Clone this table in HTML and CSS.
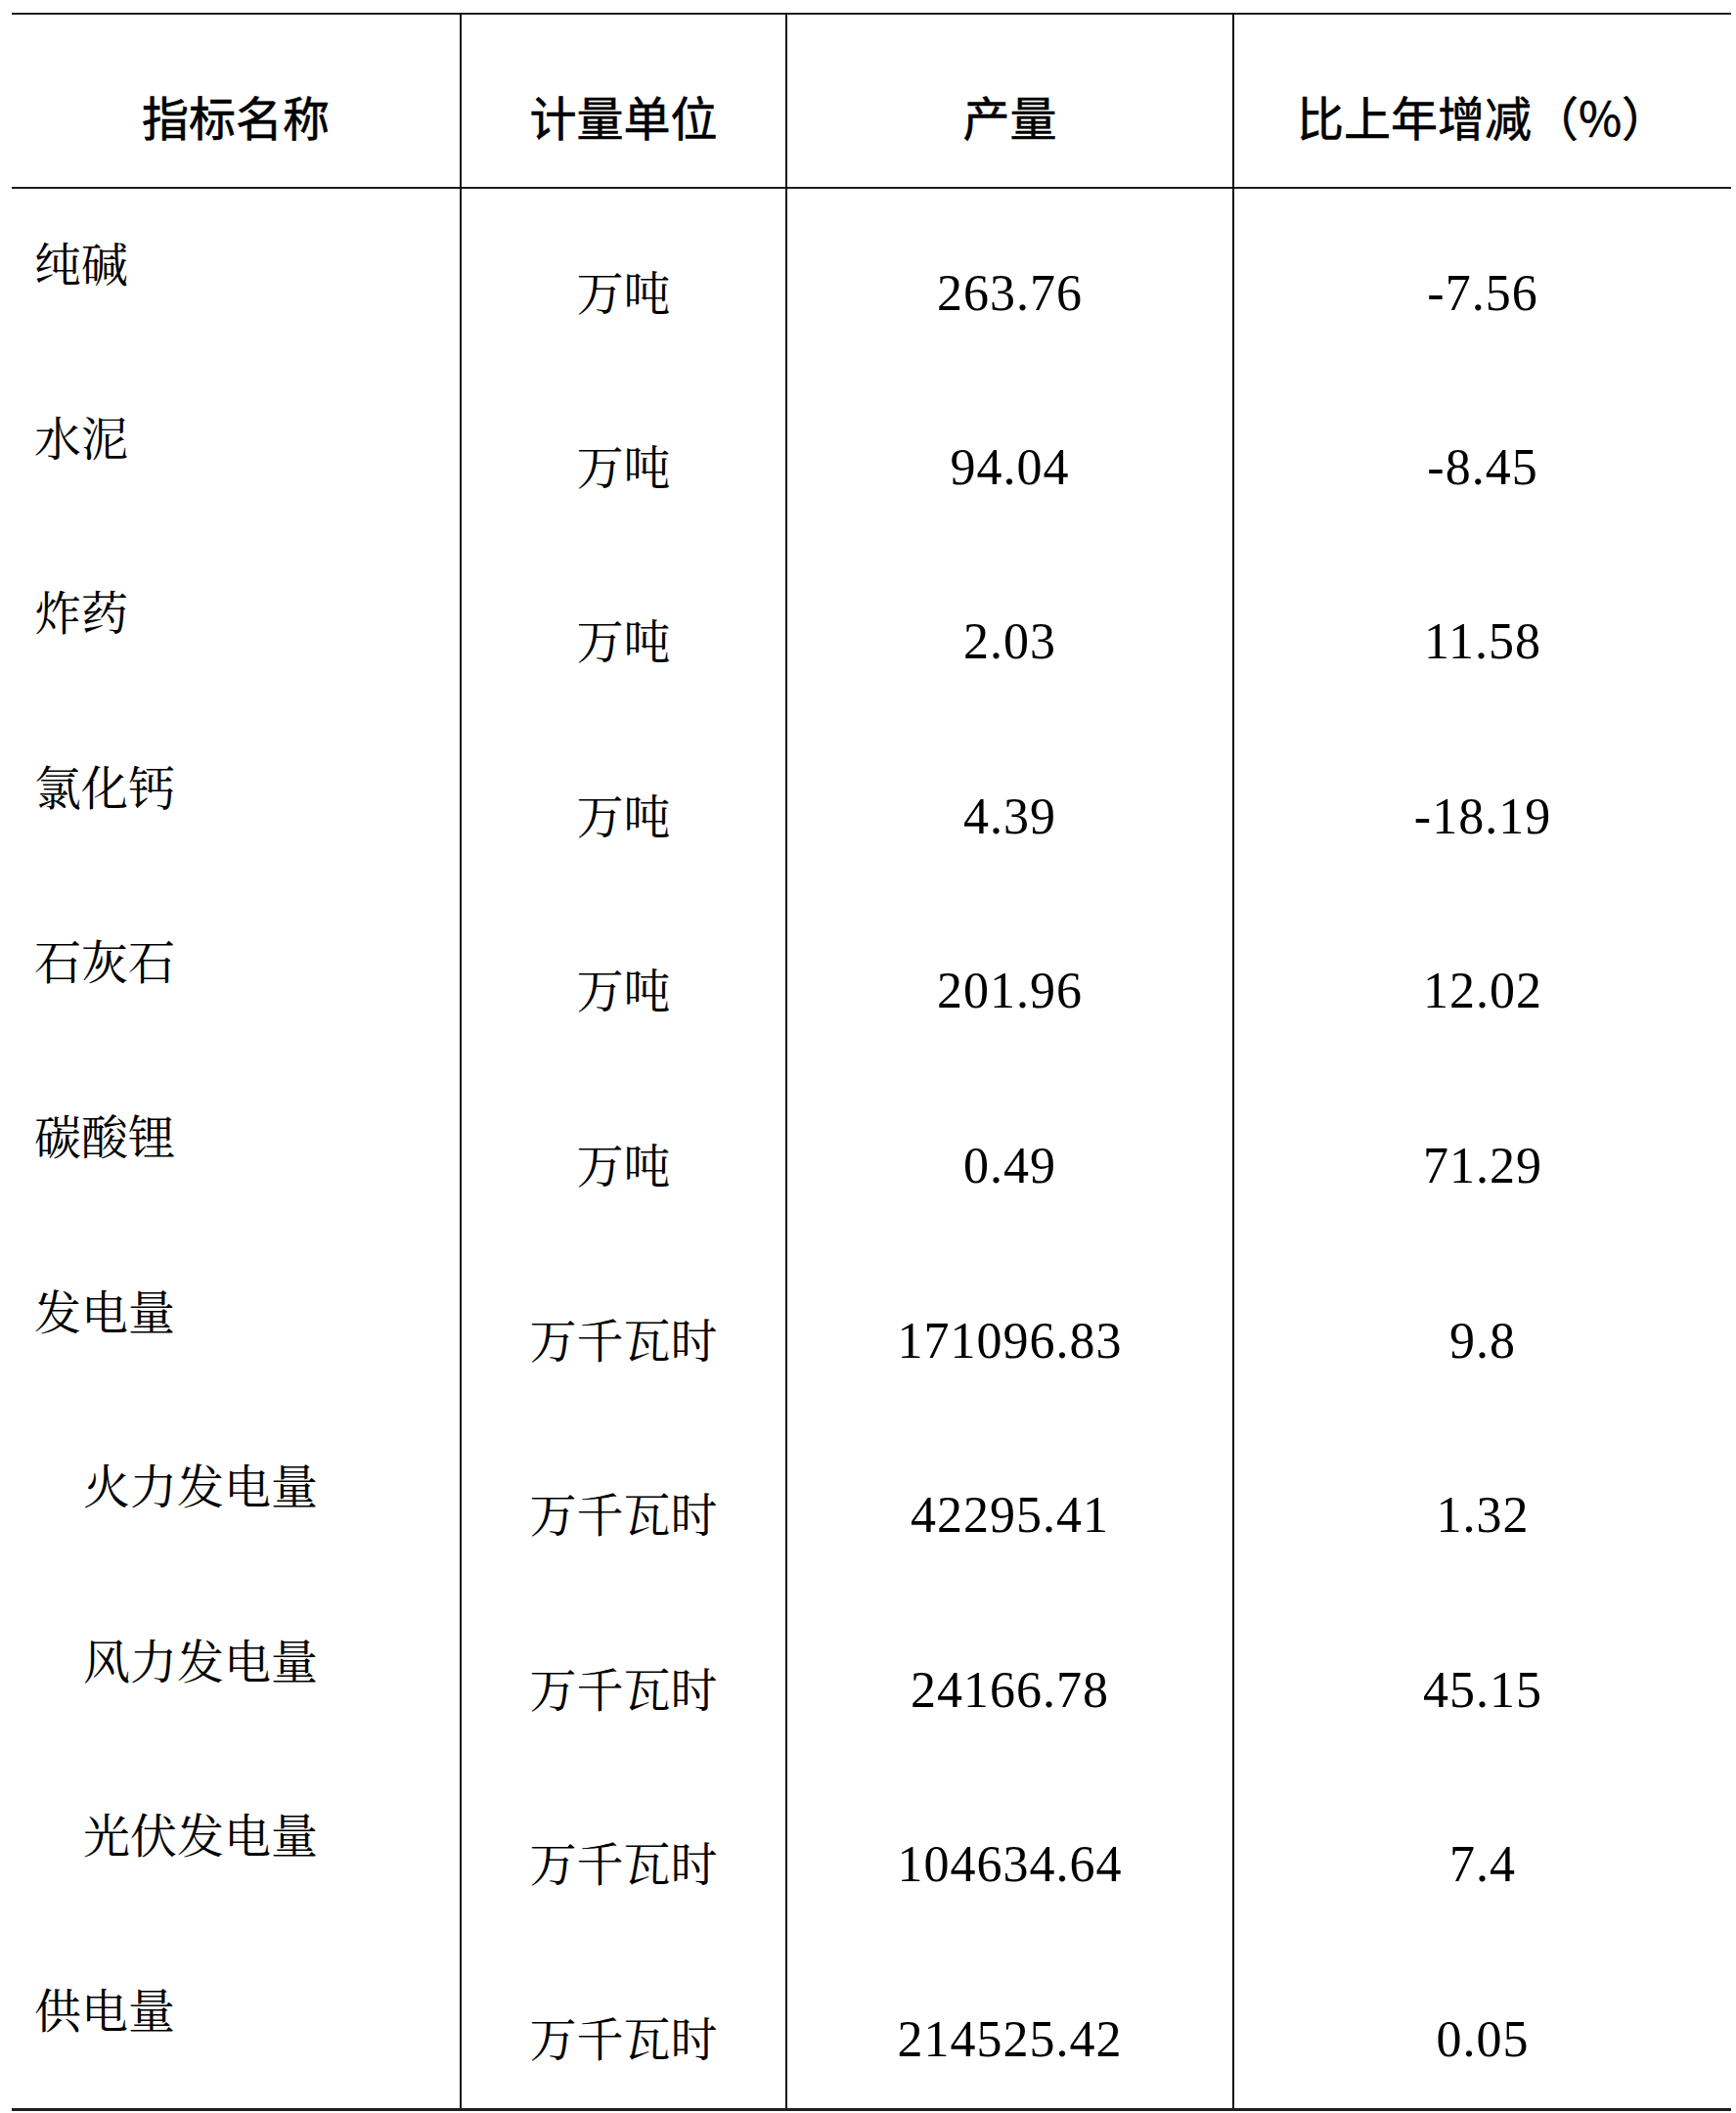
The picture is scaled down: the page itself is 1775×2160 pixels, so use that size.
FILE: index.html
```html
<!DOCTYPE html>
<html lang="zh-CN">
<head>
<meta charset="utf-8">
<title>指标</title>
<link rel="stylesheet" href="styles.css">
</head>
<body>
<div class="wrap">
<table class="stats">
  <colgroup>
    <col class="c1"><col class="c2"><col class="c3"><col class="c4">
  </colgroup>
  <thead>
    <tr>
      <th>指标名称</th>
      <th>计量单位</th>
      <th>产量</th>
      <th>比上年增减（%）</th>
    </tr>
  </thead>
  <tbody>
    <tr><td class="name">纯碱</td><td class="unit">万吨</td><td class="num">263.76</td><td class="num">-7.56</td></tr>
    <tr><td class="name">水泥</td><td class="unit">万吨</td><td class="num">94.04</td><td class="num">-8.45</td></tr>
    <tr><td class="name">炸药</td><td class="unit">万吨</td><td class="num">2.03</td><td class="num">11.58</td></tr>
    <tr><td class="name">氯化钙</td><td class="unit">万吨</td><td class="num">4.39</td><td class="num">-18.19</td></tr>
    <tr><td class="name">石灰石</td><td class="unit">万吨</td><td class="num">201.96</td><td class="num">12.02</td></tr>
    <tr><td class="name">碳酸锂</td><td class="unit">万吨</td><td class="num">0.49</td><td class="num">71.29</td></tr>
    <tr><td class="name">发电量</td><td class="unit">万千瓦时</td><td class="num">171096.83</td><td class="num">9.8</td></tr>
    <tr><td class="name sub">火力发电量</td><td class="unit">万千瓦时</td><td class="num">42295.41</td><td class="num">1.32</td></tr>
    <tr><td class="name sub">风力发电量</td><td class="unit">万千瓦时</td><td class="num">24166.78</td><td class="num">45.15</td></tr>
    <tr><td class="name sub">光伏发电量</td><td class="unit">万千瓦时</td><td class="num">104634.64</td><td class="num">7.4</td></tr>
    <tr><td class="name">供电量</td><td class="unit">万千瓦时</td><td class="num">214525.42</td><td class="num">0.05</td></tr>
  </tbody>
</table>
</div>
</body>
</html>
```
FILE: styles.css
```css
html, body {
  margin: 0;
  padding: 0;
  background: #ffffff;
}

.wrap {
  padding: 13px 5px 0 12px;
}

.stats {
  width: 1758px;
  border-collapse: collapse;
  table-layout: fixed;
  color: #000;
  font-family: "Noto Serif CJK SC", "Noto Sans CJK SC", serif;
  font-size: 48px;
  line-height: 56px;
}

.c1 { width: 459px; }
.c2 { width: 333px; }
.c3 { width: 457px; }
.c4 { width: 509px; }

.stats thead tr {
  border-top: 2px solid #1e1e1e;
  border-bottom: 2px solid #1e1e1e;
}

.stats tbody tr:last-child {
  border-bottom: 3px solid #1e1e1e;
}

.stats th,
.stats td {
  padding: 0;
  vertical-align: top;
  border-left: 2px solid #111;
}

.stats th:first-child,
.stats td:first-child {
  border-left: none;
}

.stats th {
  height: 178px;
  box-sizing: border-box;
  padding-top: 75px;
  font-family: "Noto Sans CJK SC", sans-serif;
  font-weight: 400;
  -webkit-text-stroke: 0.6px #000;
  text-align: center;
}

.stats td {
  height: 178.6px;
  box-sizing: border-box;
}

.name {
  text-align: left;
  padding-left: 23px !important;
  padding-top: 47px !important;
}

.name.sub {
  padding-left: 73px !important;
}

.unit {
  text-align: center;
  padding-top: 76px !important;
}

.num {
  text-align: center;
  padding-top: 79px !important;
  font-family: "Liberation Serif", serif;
  font-size: 52px;
  letter-spacing: 1px;
}
```
